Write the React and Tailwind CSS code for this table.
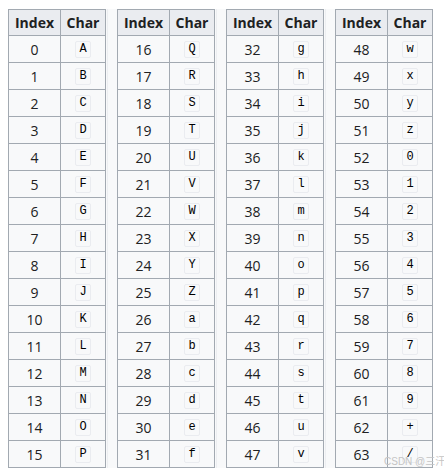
import React from "react";

const chars = "ABCDEFGHIJKLMNOPQRSTUVWXYZabcdefghijklmnopqrstuvwxyz0123456789+/".split("");

function Table({ start }) {
  const rows = [];
  for (let i = 0; i < 16; i++) rows.push(start + i);
  return (
    <div className="flex flex-col border-l border-t border-[#a2a9b1] w-[98px] bg-[#f8f9fa]">
      <div className="flex h-[26px] bg-[#eaecf0]">
        <div className="w-[52px] border-r border-b border-[#a2a9b1] flex items-center justify-center font-bold text-[14px]">
          Index
        </div>
        <div className="w-[45px] border-r border-b border-[#a2a9b1] flex items-center justify-center font-bold text-[14px]">
          Char
        </div>
      </div>
      {rows.map((n) => (
        <div key={n} className="flex h-[27px]">
          <div className="w-[52px] border-r border-b border-[#a2a9b1] flex items-center justify-center text-[14px]">
            {n}
          </div>
          <div className="w-[45px] border-r border-b border-[#a2a9b1] flex items-center justify-center">
            <span
              className="w-[16px] h-[17px] flex items-center justify-center border border-[#eaecf0] bg-[#f8f9fa] rounded-[2px] text-[12px] leading-none text-[#000]"
              style={{ fontFamily: '"Liberation Mono", "DejaVu Sans Mono", monospace' }}
            >
              {chars[n]}
            </span>
          </div>
        </div>
      ))}
    </div>
  );
}

function Gap() {
  return (
    <div className="w-[11px] h-[459px] bg-[#f8f9fa] flex">
      <div className="ml-[1px] w-[1px] h-full bg-[#eceef1]" />
    </div>
  );
}

export default function App() {
  return (
    <div
      className="relative w-[444px] h-[475px] bg-white text-[#202122]"
      style={{ fontFamily: '"Open Sans", "Liberation Sans", sans-serif' }}
    >
      <div className="flex pt-[9px] pl-[8px]">
        <Table start={0} />
        <Gap />
        <Table start={16} />
        <Gap />
        <Table start={32} />
        <Gap />
        <Table start={48} />
      </div>
      <div
        className="absolute left-[384px] top-[457px] whitespace-nowrap text-[10px] leading-none text-[#c4c4c4]"
        style={{ fontFamily: '"Liberation Sans", "Noto Sans CJK SC", sans-serif' }}
      >
        CSDN @三汗
      </div>
    </div>
  );
}
